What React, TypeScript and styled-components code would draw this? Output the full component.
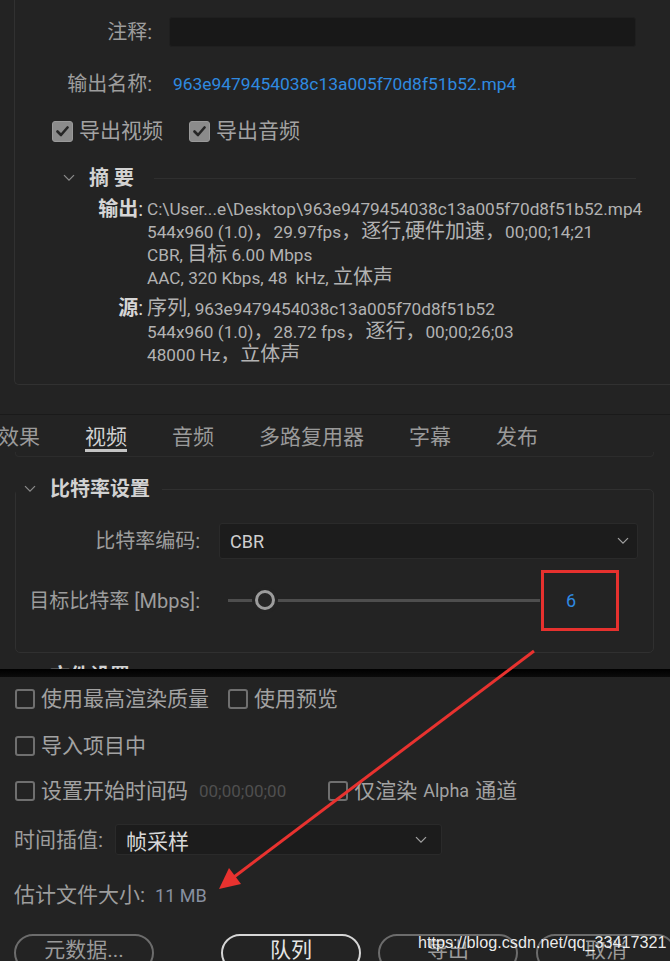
import React from 'react';
import styled, { createGlobalStyle } from 'styled-components';

const GlobalStyle = createGlobalStyle`
  html, body {
    margin: 0;
    background: #232323;
  }
  body {
    font-family: Roboto, "Noto Sans CJK SC", sans-serif;
    color: #a0a0a0;
    overflow: hidden;
  }
`;

const Page = styled.div`
  position: relative;
  width: 670px;
  height: 961px;
  overflow: hidden;
  background: #232323;
`;

const Upper = styled.div`
  display: flow-root;
  height: 669px;
  overflow: hidden;
`;

const TopPanel = styled.div`
  display: flow-root;
  margin-left: 14px;
  height: 385px;
  box-sizing: border-box;
  border-left: 1px solid #313131;
  border-bottom: 1px solid #313131;
  border-bottom-left-radius: 5px;
`;

const FormRow = styled.div<{ $top: number }>`
  display: grid;
  grid-template-columns: 137px 1fr;
  column-gap: 17px;
  align-items: center;
  min-height: 30px;
  margin-top: ${(p) => p.$top}px;
  padding-right: 34px;
`;

const Label = styled.div`
  text-align: right;
  font-size: 20px;
  line-height: 24px;
  color: #9d9d9d;
  white-space: nowrap;
`;

const TextInput = styled.div`
  height: 30px;
  box-sizing: border-box;
  background: #181818;
  border: 1px solid #1f1f1f;
  border-radius: 3px;
`;

const FileLink = styled.div`
  padding-left: 4px;
  font-size: 17.4px;
  color: #2f8ae0;
  white-space: nowrap;
`;

const CheckRow = styled.div<{ $top: number; $gap: number; $indent?: number }>`
  display: flex;
  align-items: center;
  gap: ${(p) => p.$gap}px;
  height: 24px;
  margin-top: ${(p) => p.$top}px;
  padding-left: ${(p) => p.$indent ?? 0}px;
`;

const CheckItem = styled.label`
  display: flex;
  align-items: center;
  gap: 6px;
  font-size: 21px;
  line-height: 24px;
  color: #a2a2a2;
  white-space: nowrap;
`;

const Box = styled.span<{ $checked?: boolean; $size: number }>`
  display: inline-flex;
  align-items: center;
  justify-content: center;
  width: ${(p) => p.$size}px;
  height: ${(p) => p.$size}px;
  box-sizing: border-box;
  border-radius: 3px;
  background: ${(p) => (p.$checked ? '#8b8b8b' : 'transparent')};
  border: ${(p) => (p.$checked ? '1px solid #9a9a9a' : '2px solid #6f6f6f')};
  flex-shrink: 0;
`;

const SectionHead = styled.div`
  display: flex;
  align-items: center;
  height: 24px;
  margin-top: 23px;
  padding-left: 48px;
  padding-right: 34px;
`;

const HeadTitle = styled.span<{ $spaced?: boolean }>`
  margin-left: 14px;
  font-size: 20px;
  line-height: 24px;
  font-weight: bold;
  color: #d2d2d2;
  letter-spacing: ${(p) => (p.$spaced ? '5px' : '0')};
  white-space: nowrap;
`;

const HeadRule = styled.span`
  flex: 1;
  height: 1px;
  margin-left: 15px;
  background: #2f2f2f;
`;

const SummaryGroup = styled.div<{ $top: number }>`
  display: grid;
  grid-template-columns: 128px 1fr;
  column-gap: 4px;
  margin-top: ${(p) => p.$top}px;
`;

const SummaryLabel = styled.div`
  text-align: right;
  font-size: 20px;
  line-height: 22px;
  color: #d6d6d6;
  white-space: nowrap;
  b {
    font-weight: bold;
  }
`;

const SummaryLines = styled.div`
  font-size: 17.2px;
  line-height: 22px;
  color: #b2b2b2;
  white-space: nowrap;
`;

const Zh = styled.span`
  font-size: 20px;
`;

const TabStrip = styled.div`
  margin-top: 29px;
  border-top: 1px solid #1a1a1a;
  overflow: hidden;
`;

const TabsRow = styled.div`
  display: flex;
  gap: 45px;
  margin-left: -2px;
  padding-top: 10px;
`;

const Tab = styled.div<{ $active?: boolean }>`
  flex-shrink: 0;
  font-size: 21px;
  line-height: 24px;
  color: ${(p) => (p.$active ? '#d0d0d0' : '#9a9a9a')};
  border-bottom: 3px solid ${(p) => (p.$active ? '#c4c4c4' : 'transparent')};
  white-space: nowrap;
`;

const TabEdge = styled.div`
  margin: 0 16px 0 15px;
  height: 4px;
  border: 1px solid #2c2c2c;
  border-top: none;
  border-radius: 0 0 4px 4px;
`;

const Group = styled.fieldset`
  margin: 20px 16px 0 15px;
  padding: 0 15px 21px 0;
  min-width: 0;
  border: 1px solid #303030;
  border-radius: 5px;
`;

const Legend = styled.legend`
  display: flex;
  align-items: center;
  padding: 0 12px 0 8px;
`;

const GroupRow = styled.div<{ $top: number }>`
  display: grid;
  grid-template-columns: 184px 1fr;
  column-gap: 19px;
  align-items: center;
  margin-top: ${(p) => p.$top}px;
`;

const Select = styled.div<{ $height: number }>`
  display: flex;
  align-items: center;
  justify-content: space-between;
  height: ${(p) => p.$height}px;
  box-sizing: border-box;
  padding: 0 8px 0 10px;
  background: #1c1c1c;
  border: 1px solid #2a2a2a;
  border-radius: 3px;
  font-size: 18px;
  color: #cfcfcf;
`;

const SliderWrap = styled.div`
  display: flex;
  align-items: center;
`;

const Track = styled.div`
  position: relative;
  flex: 1;
  height: 3px;
  margin-left: 9px;
  background: #4e4e4e;
`;

const Thumb = styled.span`
  position: absolute;
  left: 27px;
  top: -9px;
  width: 20px;
  height: 20px;
  box-sizing: border-box;
  border-radius: 50%;
  border: 3px solid #9c9c9c;
  background: #262626;
  box-shadow: 0 0 0 3px #232323;
`;

const ValueBox = styled.div`
  display: flex;
  align-items: center;
  width: 78px;
  height: 61px;
  box-sizing: border-box;
  margin: 0 19px 0 1px;
  padding-left: 22px;
  border: 3px solid #e6312e;
  font-size: 18px;
  color: #2f8ae0;
`;

const NextHead = styled.div`
  display: flex;
  align-items: center;
  margin-top: 11px;
  padding-left: 24px;
  height: 24px;
`;

const Seam = styled.div`
  height: 8px;
  background: linear-gradient(#000, #0b0b0b);
`;

const Lower = styled.div`
  display: flex;
  flex-direction: column;
  padding: 10px 0 0 15px;
`;

const Timecode = styled.span`
  margin-left: 11px;
  margin-right: 42px;
  font-size: 17px;
  color: #4f4f4f;
`;

const Latin = styled.span`
  font-size: 18px;
`;

const FieldRow = styled.div<{ $top: number }>`
  display: flex;
  align-items: center;
  margin-top: ${(p) => p.$top}px;
  margin-left: -1px;
`;

const PlainLabel = styled.span`
  font-size: 21px;
  line-height: 24px;
  color: #9d9d9d;
  white-space: nowrap;
`;

const InterpSelect = styled(Select)`
  width: 327px;
  margin-left: 12px;
  padding-right: 14px;
  font-size: 21px;
  color: #d8d8d8;
`;

const SizeValue = styled.span`
  margin-left: 10px;
  font-size: 18px;
  color: #8890a0;
`;

const ButtonRow = styled.div`
  display: flex;
  margin-top: 27px;
  margin-left: -1px;
`;

const PillButton = styled.div<{ $primary?: boolean; $offset: number }>`
  display: flex;
  justify-content: center;
  flex-shrink: 0;
  width: 140px;
  height: 38px;
  box-sizing: border-box;
  padding-top: 2px;
  margin-left: ${(p) => p.$offset}px;
  border: 2px solid ${(p) => (p.$primary ? '#d6d6d6' : '#6c6c6c')};
  border-radius: 19px;
  font-size: 21px;
  line-height: 24px;
  color: ${(p) => (p.$primary ? '#e6e6e6' : '#9a9a9a')};
`;

const Watermark = styled.div`
  position: absolute;
  left: 418px;
  top: 931px;
  font-family: "Liberation Sans", Arial, sans-serif;
  font-size: 16.2px;
  line-height: 22px;
  color: rgba(255, 255, 255, 0.92);
  white-space: nowrap;
`;

const ArrowLayer = styled.svg`
  position: absolute;
  left: 0;
  top: 0;
  pointer-events: none;
`;

const Chevron = ({ color = '#8a8a8a', width = 12 }: { color?: string; width?: number }) => (
  <svg width={width} height={width * 0.6} viewBox="0 0 12 7" style={{ flexShrink: 0 }}>
    <path d="M1 1 L6 6 L11 1" fill="none" stroke={color} strokeWidth="1.3" />
  </svg>
);

const Check = () => (
  <svg width="13" height="11" viewBox="0 0 13 11">
    <path d="M1.5 5.5 L5 9 L11.5 1.5" fill="none" stroke="#262626" strokeWidth="2.6" strokeLinecap="round" strokeLinejoin="round" />
  </svg>
);

const Checkbox = ({ checked, size, children }: { checked?: boolean; size: number; children: React.ReactNode }) => (
  <CheckItem>
    <Box $checked={checked} $size={size}>{checked && <Check />}</Box>
    {children}
  </CheckItem>
);

export default function App() {
  const tabs = ['效果', '视频', '音频', '多路复用器', '字幕', '发布'];
  return (
    <Page>
      <GlobalStyle />
      <Upper>
        <TopPanel>
          <FormRow $top={17}>
            <Label>注释:</Label>
            <TextInput />
          </FormRow>
          <FormRow $top={22}>
            <Label>输出名称:</Label>
            <FileLink>963e9479454038c13a005f70d8f51b52.mp4</FileLink>
          </FormRow>
          <CheckRow $top={20} $gap={26} $indent={37}>
            <Checkbox checked size={21}>导出视频</Checkbox>
            <Checkbox checked size={21}>导出音频</Checkbox>
          </CheckRow>
          <SectionHead>
            <Chevron />
            <HeadTitle $spaced>摘要</HeadTitle>
            <HeadRule />
          </SectionHead>
          <SummaryGroup $top={8}>
            <SummaryLabel><b>输出</b>:</SummaryLabel>
            <SummaryLines>
              <div>C:\User...e\Desktop\963e9479454038c13a005f70d8f51b52.mp4</div>
              <div>544x960 (1.0)<Zh>，</Zh>29.97fps<Zh>，逐行,硬件加速，</Zh>00;00;14;21</div>
              <div>CBR, <Zh>目标</Zh> 6.00 Mbps</div>
              <div>AAC, 320 Kbps, 48&nbsp; kHz, <Zh>立体声</Zh></div>
            </SummaryLines>
          </SummaryGroup>
          <SummaryGroup $top={8}>
            <SummaryLabel><b>源</b>:</SummaryLabel>
            <SummaryLines>
              <div><Zh>序列</Zh>, 963e9479454038c13a005f70d8f51b52</div>
              <div>544x960 (1.0)<Zh>，</Zh>28.72 fps<Zh>，逐行，</Zh>00;00;26;03</div>
              <div>48000 Hz<Zh>，立体声</Zh></div>
            </SummaryLines>
          </SummaryGroup>
        </TopPanel>

        <TabStrip>
          <TabsRow>
            {tabs.map((t) => (
              <Tab key={t} $active={t === '视频'}>{t}</Tab>
            ))}
          </TabsRow>
          <TabEdge />
        </TabStrip>

        <Group>
          <Legend>
            <Chevron />
            <HeadTitle>比特率设置</HeadTitle>
          </Legend>
          <GroupRow $top={22}>
            <Label>比特率编码:</Label>
            <Select $height={36}>
              <span>CBR</span>
              <Chevron color="#a0a0a0" />
            </Select>
          </GroupRow>
          <GroupRow $top={11}>
            <Label>目标比特率 [Mbps]:</Label>
            <SliderWrap>
              <Track>
                <Thumb />
              </Track>
              <ValueBox>6</ValueBox>
            </SliderWrap>
          </GroupRow>
        </Group>
        <NextHead>
          <Chevron />
          <HeadTitle>文件设置</HeadTitle>
        </NextHead>
      </Upper>
      <Seam />
      <Lower>
        <CheckRow $top={0} $gap={19}>
          <Checkbox size={20}>使用最高渲染质量</Checkbox>
          <Checkbox size={20}>使用预览</Checkbox>
        </CheckRow>
        <CheckRow $top={23} $gap={19}>
          <Checkbox size={20}>导入项目中</Checkbox>
        </CheckRow>
        <CheckRow $top={21} $gap={0}>
          <Checkbox size={20}>设置开始时间码</Checkbox>
          <Timecode>00;00;00;00</Timecode>
          <Checkbox size={20}>仅渲染 <Latin>Alpha</Latin> 通道</Checkbox>
        </CheckRow>
        <FieldRow $top={21}>
          <PlainLabel>时间插值:</PlainLabel>
          <InterpSelect $height={31}>
            <span>帧采样</span>
            <Chevron color="#a0a0a0" />
          </InterpSelect>
        </FieldRow>
        <FieldRow $top={28}>
          <PlainLabel>估计文件大小:</PlainLabel>
          <SizeValue>11 MB</SizeValue>
        </FieldRow>
        <ButtonRow>
          <PillButton $offset={0}>元数据...</PillButton>
          <PillButton $offset={67} $primary>队列</PillButton>
          <PillButton $offset={17}>导出</PillButton>
          <PillButton $offset={18}>取消</PillButton>
        </ButtonRow>
      </Lower>
      <Watermark>https://blog.csdn.net/qq_33417321</Watermark>
      <ArrowLayer width="670" height="961" viewBox="0 0 670 961">
        <line x1="534" y1="651" x2="230" y2="880" stroke="#e8322f" strokeWidth="3" />
        <polygon points="219,889 241,884 229,868" fill="#e8322f" />
      </ArrowLayer>
    </Page>
  );
}
